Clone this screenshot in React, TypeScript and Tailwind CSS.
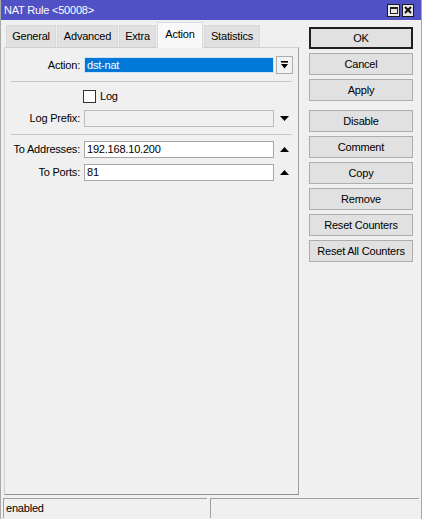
import React from "react";

const tabs = [
  { label: "General", w: "w-[50px]" },
  { label: "Advanced", w: "w-[61px]" },
  { label: "Extra", w: "w-[37px]" },
  { label: "Action", w: "w-[46px]", active: true },
  { label: "Statistics", w: "w-[56px]" },
];

const TriangleDown = () => (
  <svg width="9" height="5" viewBox="0 0 9 5">
    <path d="M0 0h9L4.5 5z" fill="#000" />
  </svg>
);

const TriangleUp = () => (
  <svg width="9" height="5" viewBox="0 0 9 5">
    <path d="M0 5h9L4.5 0z" fill="#000" />
  </svg>
);

const Btn = ({ children, primary }: { children: React.ReactNode; primary?: boolean }) => (
  <button
    className={`h-[22px] w-[104px] flex items-center justify-center bg-[#e1e1e1] text-black ${
      primary ? "border-2 border-[#202020]" : "border border-[#adadad]"
    }`}
  >
    {children}
  </button>
);

const Label = ({ children }: { children: React.ReactNode }) => (
  <div className="w-[76px] text-right pr-[1px] shrink-0">{children}</div>
);

export default function App() {
  return (
    <div className="w-[422px] h-[519px] bg-[#f0f0f0] flex flex-col border-l border-r border-[#a9a9a9] font-['Liberation_Sans',Arial,sans-serif] text-[11px] tracking-[-0.2px] text-black select-none">
      {/* title bar */}
      <div className="h-[20px] shrink-0 bg-[#5151c6] flex items-center justify-between pl-[3px] pr-[7px]">
        <span className="text-white text-[11px]">NAT Rule &lt;50008&gt;</span>
        <div className="flex gap-[2px]">
          <div className="w-[13px] h-[13px] bg-[#e8e8e8] border border-[#1a1a1a] flex items-center justify-center">
            <div className="w-[8px] h-[7px] border border-[#222] border-t-2" />
          </div>
          <div className="w-[12px] h-[13px] bg-[#e8e8e8] border border-[#1a1a1a] flex items-center justify-center">
            <svg width="8" height="8" viewBox="0 0 8 8">
              <path d="M1 1l6 6M7 1l-6 6" stroke="#111" strokeWidth="2" />
            </svg>
          </div>
        </div>
      </div>

      <div className="flex-1 flex pl-[3px]">
        {/* left: tabs and panel */}
        <div className="w-[295px] flex flex-col">
          <div className="h-[27px] shrink-0 flex items-end gap-[1px] pl-[2px]">
            {tabs.map((t) =>
              t.active ? (
                <div
                  key={t.label}
                  className={`${t.w} h-[26px] -mb-px relative z-10 bg-[#f9f9f9] border border-b-0 border-[#d9d9d9] flex items-center justify-center pb-[3px]`}
                >
                  {t.label}
                </div>
              ) : (
                <div
                  key={t.label}
                  className={`${t.w} h-[22px] bg-[#e1e1e1] border border-b-0 border-[#d9d9d9] flex items-center justify-center`}
                >
                  {t.label}
                </div>
              )
            )}
          </div>

          <div className="flex-1 border border-[#d0d0d0] border-r-[#a0a0a0] border-b-[#909090] bg-[#f0f0f0] pt-[8px]">
            {/* Action */}
            <div className="h-[18px] flex items-center">
              <Label>Action:</Label>
              <div className="ml-[3px] w-[190px] h-[16px] bg-[#0078d7] border border-[#cfe4f7] text-white flex items-center pl-[2px]">
                dst-nat
              </div>
              <div className="ml-[2px] w-[17px] h-[18px] bg-[#f2f2f2] border border-[#adadad] flex items-center justify-center">
                <svg width="7" height="8" viewBox="0 0 7 8">
                  <rect x="0" y="0" width="7" height="1.6" fill="#000" />
                  <path d="M0 3h7L3.5 7.5z" fill="#000" />
                </svg>
              </div>
            </div>

            <div className="mt-[7px] ml-[6px] mr-[6px] h-px bg-[#c8c8c8]" />

            {/* Log */}
            <div className="mt-[8px] h-[13px] flex items-center">
              <div className="w-[77px] shrink-0" />
              <div className="ml-[1px] w-[13px] h-[13px] bg-white border border-[#333]" />
              <span className="ml-[4px]">Log</span>
            </div>

            {/* Log Prefix */}
            <div className="mt-[7px] h-[17px] flex items-center">
              <Label>Log Prefix:</Label>
              <div className="ml-[3px] w-[190px] h-[17px] bg-[#f0f0f0] border border-[#bdbdbd]" />
              <div className="ml-[2px] w-[17px] flex items-center justify-center">
                <TriangleDown />
              </div>
            </div>

            <div className="mt-[7px] ml-[6px] mr-[6px] h-px bg-[#c8c8c8]" />

            {/* To Addresses */}
            <div className="mt-[6px] h-[17px] flex items-center">
              <Label>To Addresses:</Label>
              <div className="ml-[3px] w-[190px] h-[17px] bg-white border border-[#a6a6a6] flex items-center pl-[2px]">
                192.168.10.200
              </div>
              <div className="ml-[2px] w-[17px] flex items-center justify-center">
                <TriangleUp />
              </div>
            </div>

            {/* To Ports */}
            <div className="mt-[6px] h-[17px] flex items-center">
              <Label>To Ports:</Label>
              <div className="ml-[3px] w-[190px] h-[17px] bg-white border border-[#a6a6a6] flex items-center pl-[2px]">
                81
              </div>
              <div className="ml-[2px] w-[17px] flex items-center justify-center">
                <TriangleUp />
              </div>
            </div>
          </div>
        </div>

        {/* right: buttons */}
        <div className="ml-[10px] pt-[7px] flex flex-col">
          <div className="flex flex-col gap-[4px]">
            <Btn primary>OK</Btn>
            <Btn>Cancel</Btn>
            <Btn>Apply</Btn>
          </div>
          <div className="mt-[9px] flex flex-col gap-[4px]">
            <Btn>Disable</Btn>
            <Btn>Comment</Btn>
            <Btn>Copy</Btn>
            <Btn>Remove</Btn>
            <Btn>Reset Counters</Btn>
            <Btn>Reset All Counters</Btn>
          </div>
        </div>
      </div>

      {/* status bar */}
      <div className="h-[24px] shrink-0 flex gap-[3px] pl-[2px] pt-[3px] pb-[1px]">
        <div className="w-[204px] border-t border-l border-[#a0a0a0] flex items-center pl-[2px]">enabled</div>
        <div className="w-[209px] border-t border-l border-[#a0a0a0]" />
      </div>
    </div>
  );
}
